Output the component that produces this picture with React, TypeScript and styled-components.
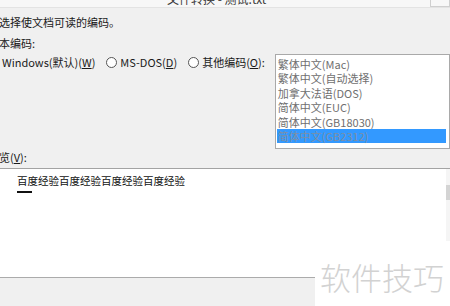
import styled, { createGlobalStyle } from 'styled-components';

const GlobalStyle = createGlobalStyle`
    html, body {
        margin: 0;
        padding: 0;
        background: #f0f0f0;
    }
    body {
        font-family: "Noto Sans CJK SC", "Noto Sans", sans-serif;
    }
`;

const encodings = [
    '繁体中文(Mac)',
    '繁体中文(自动选择)',
    '加拿大法语(DOS)',
    '简体中文(EUC)',
    '简体中文(GB18030)',
    '简体中文(GB2312)',
];

const Dialog = styled.div`
    position: relative;
    width: 450px;
    height: 306px;
    overflow: hidden;
    background: #f0f0f0;
    display: flex;
    flex-direction: column;
    font-size: 11px;
    color: #1a1a1a;
`;

const TitleBar = styled.div`
    height: 7px;
    flex: none;
    display: flex;
    align-items: flex-end;
    overflow: hidden;
    background: #f7f7f7;
    border-bottom: 1px solid #e3e3e3;
    padding-left: 167px;
`;

const TitleText = styled.span`
    font-size: 12px;
    line-height: 12px;
    margin-bottom: 2px;
    color: #3a3a3a;
    white-space: nowrap;
`;

const TitleButton = styled.span`
    margin-left: auto;
    width: 18px;
    height: 6px;
    border: 1px solid #cfcfcf;
    border-top: none;
    align-self: flex-start;
`;

const Body = styled.div`
    margin-left: -12px;
    padding-top: 4px;
    display: flex;
    flex-direction: column;
`;

const Line = styled.div`
    height: 21px;
    line-height: 21px;
    white-space: nowrap;
`;

const OptionRow = styled.div`
    display: flex;
    align-items: flex-start;
    height: 93px;
`;

const RadioLabel = styled.label<{ $gap: number }>`
    display: flex;
    align-items: center;
    height: 16px;
    margin-right: ${p => p.$gap}px;
    white-space: nowrap;
    gap: 3px;
`;

const RadioCircle = styled.span<{ $checked?: boolean }>`
    width: 9px;
    height: 9px;
    border-radius: 50%;
    border: 1px solid #555;
    background: #fff;
    position: relative;
    &::after {
        content: '';
        display: ${p => (p.$checked ? 'block' : 'none')};
        position: absolute;
        inset: 2px;
        border-radius: 50%;
        background: #222;
    }
`;

const Key = styled.span`
    text-decoration: underline;
`;

const ListBox = styled.div`
    width: 172px;
    height: 90px;
    margin-left: 0;
    border: 1px solid #a9a9a9;
    background: #fff;
    padding: 2px 1px 1px;
    box-sizing: content-box;
    display: flex;
    flex-direction: column;
`;

const ListItem = styled.div<{ $selected?: boolean }>`
    height: 14.4px;
    line-height: 14.4px;
    padding-left: 1px;
    margin-right: 2px;
    color: ${p => (p.$selected ? '#7d8fa6' : '#6f6f6f')};
    background: ${p => (p.$selected ? '#3399ff' : 'transparent')};
    white-space: nowrap;
`;

const PreviewLabel = styled.div`
    margin: 2px 0 3px;
    height: 16px;
    line-height: 16px;
`;

const Preview = styled.div`
    height: 108px;
    background: #fff;
    border-top: 1px solid #a3a3a3;
    border-bottom: 1px solid #ababab;
    display: flex;
`;

const PreviewContent = styled.div`
    flex: 1;
    padding: 5px 0 0 17px;
`;

const PreviewText = styled.div`
    font-size: 10.5px;
    line-height: 14px;
    color: #111;
`;

const Caret = styled.div`
    width: 15px;
    height: 2px;
    margin-top: 3px;
    background: #111;
`;

const ScrollTrack = styled.div`
    width: 4px;
    height: 72px;
    background: #f5f5f5;
    padding-top: 16px;
    box-sizing: border-box;
`;

const ScrollThumb = styled.div`
    height: 15px;
    background: #d4d4d4;
`;

const Footer = styled.div`
    flex: 1;
    background: #f0f0f0;
`;

const Watermark = styled.div`
    position: absolute;
    right: 0;
    bottom: 0;
    width: 135px;
    height: 58px;
    background: #fff;
    padding-left: 5px;
    box-sizing: border-box;
    font-size: 31px;
    font-weight: 300;
    line-height: 58px;
    color: #d2d2d2;
    white-space: nowrap;
`;

export default function App() {
    return (
        <>
            <GlobalStyle />
            <Dialog>
                <TitleBar>
                    <TitleText>文件转换 - 测试.txt</TitleText>
                    <TitleButton />
                </TitleBar>
                <Body>
                    <Line>请选择使文档可读的编码。</Line>
                    <Line>文本编码:</Line>
                    <OptionRow>
                        <RadioLabel $gap={11}>
                            <RadioCircle $checked />
                            <span>Windows(默认)(<Key>W</Key>)</span>
                        </RadioLabel>
                        <RadioLabel $gap={11}>
                            <RadioCircle />
                            <span>MS-DOS(<Key>D</Key>)</span>
                        </RadioLabel>
                        <RadioLabel $gap={10}>
                            <RadioCircle />
                            <span>其他编码(<Key>O</Key>):</span>
                        </RadioLabel>
                        <ListBox>
                            {encodings.map((name, i) => (
                                <ListItem key={name} $selected={i === encodings.length - 1}>
                                    {name}
                                </ListItem>
                            ))}
                        </ListBox>
                    </OptionRow>
                    <PreviewLabel>预览(<Key>V</Key>):</PreviewLabel>
                </Body>
                <Preview>
                    <PreviewContent>
                        <PreviewText>百度经验百度经验百度经验百度经验</PreviewText>
                        <Caret />
                    </PreviewContent>
                    <ScrollTrack>
                        <ScrollThumb />
                    </ScrollTrack>
                </Preview>
                <Footer />
                <Watermark>软件技巧</Watermark>
            </Dialog>
        </>
    );
}
